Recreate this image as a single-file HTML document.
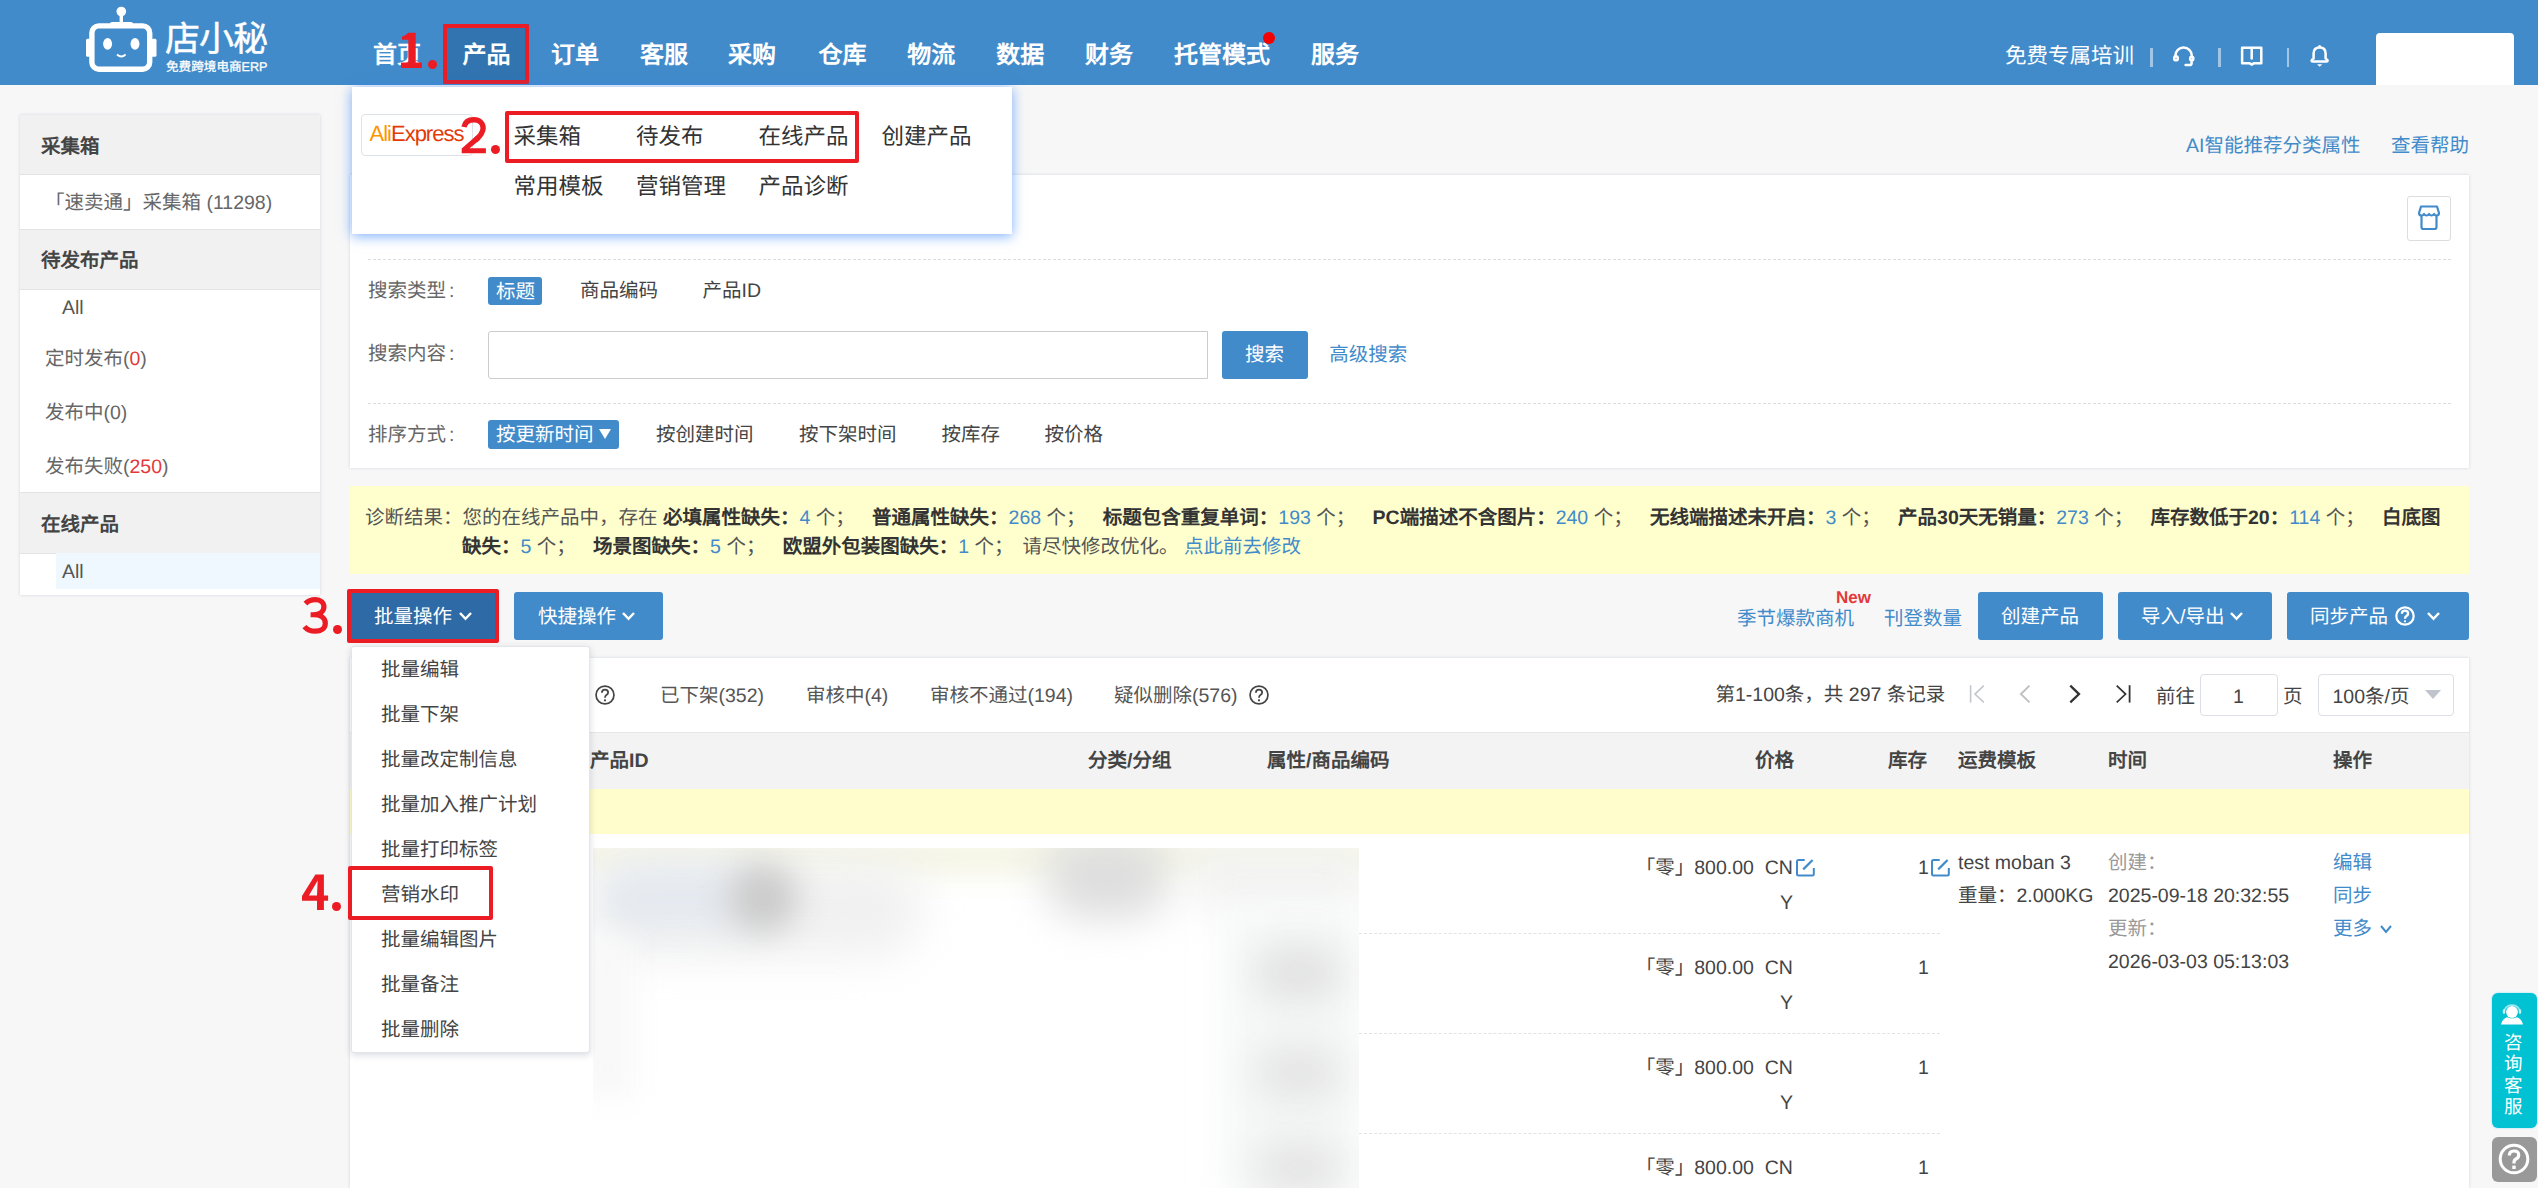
<!DOCTYPE html>
<html lang="zh-CN"><head><meta charset="utf-8"><style>
html,body{margin:0;padding:0;width:2538px;height:1188px;overflow:hidden;background:#f7f7f7;font-family:"Liberation Sans",sans-serif;text-rendering:geometricPrecision;}
.t{position:absolute;white-space:nowrap;}
b{font-weight:bold}
</style></head><body>
<div style="position:absolute;left:0px;top:0px;width:2538px;height:85px;background:#428bca"></div>
<svg style="position:absolute;left:80px;top:0px" width="90" height="80" viewBox="80 0 90 80">
<circle cx="121.3" cy="11.5" r="4.8" fill="#fff"/>
<rect x="119.6" y="13" width="3.4" height="10" fill="#fff"/>
<rect x="91.9" y="25.9" width="57.8" height="43.3" rx="7" ry="7" fill="none" stroke="#fff" stroke-width="5.4"/>
<rect x="110" y="22" width="23" height="4" rx="2" fill="#fff"/>
<rect x="86" y="38.8" width="5" height="18" rx="1.5" fill="#fff"/>
<rect x="151.5" y="38.8" width="5" height="18" rx="1.5" fill="#fff"/>
<ellipse cx="107.6" cy="43.8" rx="4.5" ry="5.9" fill="#fff"/>
<ellipse cx="135" cy="43.8" rx="4.5" ry="5.9" fill="#fff"/>
<path d="M117 54.5 Q121.3 58.5 125.6 54.5" stroke="#fff" stroke-width="1.8" fill="none"/>
</svg>
<div class="t" style="left:165px;top:19.5px;font-size:35px;line-height:40px;color:#fff;font-weight:normal;letter-spacing:-1px;-webkit-text-stroke:0.5px #fff;">店小秘</div>
<div class="t" style="left:166px;top:59.0px;font-size:12.6px;line-height:16px;color:#fff;font-weight:normal;-webkit-text-stroke:0.3px #fff;">免费跨境电商ERP</div>
<div style="position:absolute;left:443px;top:24px;width:86px;height:60px;background:#3174b0"></div>
<div class="t" style="left:373px;top:41.0px;font-size:24px;line-height:30px;color:#fff;font-weight:bold;">首页</div>
<div class="t" style="left:462.5px;top:41.0px;font-size:24px;line-height:30px;color:#fff;font-weight:bold;">产品</div>
<div class="t" style="left:551px;top:41.0px;font-size:24px;line-height:30px;color:#fff;font-weight:bold;">订单</div>
<div class="t" style="left:640px;top:41.0px;font-size:24px;line-height:30px;color:#fff;font-weight:bold;">客服</div>
<div class="t" style="left:728px;top:41.0px;font-size:24px;line-height:30px;color:#fff;font-weight:bold;">采购</div>
<div class="t" style="left:818.6px;top:41.0px;font-size:24px;line-height:30px;color:#fff;font-weight:bold;">仓库</div>
<div class="t" style="left:907.2px;top:41.0px;font-size:24px;line-height:30px;color:#fff;font-weight:bold;">物流</div>
<div class="t" style="left:996.3px;top:41.0px;font-size:24px;line-height:30px;color:#fff;font-weight:bold;">数据</div>
<div class="t" style="left:1085px;top:41.0px;font-size:24px;line-height:30px;color:#fff;font-weight:bold;">财务</div>
<div class="t" style="left:1174px;top:41.0px;font-size:24px;line-height:30px;color:#fff;font-weight:bold;">托管模式</div>
<div class="t" style="left:1311px;top:41.0px;font-size:24px;line-height:30px;color:#fff;font-weight:bold;">服务</div>
<div style="position:absolute;left:1263px;top:32px;width:12px;height:12px;border-radius:50%;background:#f40000"></div>
<div style="position:absolute;left:443px;top:24px;width:86px;height:60px;box-sizing:border-box;border:4px solid #ec1c24;border-radius:2px"></div>
<svg style="position:absolute;left:395px;top:28px" width="35" height="45" viewBox="395 28 35 45">
<path d="M408.3 32.8 H415.7 V62.6 H421.9 V68 H401 V62.6 H408.3 V39.8 H402 V36.8 Q405.5 35.8 408.3 32.8 Z" fill="#ec1c24"/>
</svg>
<div style="position:absolute;left:428.3px;top:59.6px;width:9px;height:9px;border-radius:50%;background:#ec1c24"></div>
<div class="t" style="left:2005px;top:41.4px;font-size:21.5px;line-height:30px;color:#fff;font-weight:normal;">免费专属培训</div>
<div style="position:absolute;left:2150.3px;top:48px;width:2.399999999999636px;height:19px;background:rgba(255,255,255,0.5)"></div>
<div style="position:absolute;left:2218.4px;top:48px;width:2.399999999999636px;height:19px;background:rgba(255,255,255,0.5)"></div>
<div style="position:absolute;left:2286.5px;top:48px;width:2.399999999999636px;height:19px;background:rgba(255,255,255,0.5)"></div>
<svg style="position:absolute;left:2160px;top:38px" width="180" height="36" viewBox="2160 38 180 36">
<g stroke="#fff" fill="none" stroke-width="2.5" stroke-linejoin="round" stroke-linecap="round">
<path d="M2175.45 56.2 V55.6 A8.15 8.15 0 0 1 2191.75 55.6 V56.2"/>
<rect x="2174.3" y="56.6" width="3.4" height="3.7" rx="1"/>
<rect x="2190.2" y="56.9" width="3.1" height="3.4" rx="1"/>
<path d="M2191.6 61.5 V63 Q2191.6 65.1 2189.5 65.1 H2185.6"/>
<path d="M2242.1 47.7 H2261.3 V63.2 H2254.1 L2251.7 64.6 L2249.3 63.2 H2242.1 Z"/>
<path d="M2251.7 48 V58.6"/>
<path d="M2313.6 58.6 V53.6 Q2313.6 47.6 2319.6 47.6 Q2325.6 47.6 2325.6 53.6 V58.6 Q2327.6 59.2 2327.6 60.6 Q2327.6 61.6 2326.2 61.6 H2313 Q2311.6 61.6 2311.6 60.6 Q2311.6 59.2 2313.6 58.6 Z"/>
</g>
<circle cx="2319.6" cy="46.6" r="1.5" fill="#fff"/>
<path d="M2317 64.2 H2322.3 L2319.65 66.8 Z" fill="#fff"/>
</svg>
<div style="position:absolute;left:2376px;top:33px;width:138px;height:52px;background:#fff;border-radius:4px 4px 0 0"></div>
<div style="position:absolute;left:20px;top:115px;width:300px;height:480px;background:#fff;box-shadow:0 0 3px rgba(30,40,90,0.16)"></div>
<div style="position:absolute;left:20px;top:115px;width:300px;height:59px;background:#f1f1f1;border-bottom:1px solid #e3e3e3"></div>
<div class="t" style="left:41px;top:132.0px;font-size:19.5px;line-height:30px;color:#444;font-weight:bold;">采集箱</div>
<div class="t" style="left:45px;top:188.0px;font-size:19.5px;line-height:30px;color:#666;font-weight:normal;">「速卖通」采集箱 (11298)</div>
<div style="position:absolute;left:20px;top:229px;width:300px;height:59px;background:#f1f1f1;border-top:1px solid #e3e3e3;border-bottom:1px solid #e3e3e3"></div>
<div class="t" style="left:41px;top:246.0px;font-size:19.5px;line-height:30px;color:#444;font-weight:bold;">待发布产品</div>
<div class="t" style="left:62px;top:293.0px;font-size:19.5px;line-height:30px;color:#555;font-weight:normal;">All</div>
<div class="t" style="left:45px;top:344.0px;font-size:19.5px;line-height:30px;color:#666;font-weight:normal;">定时发布(<span style="color:#e4393c">0</span>)</div>
<div class="t" style="left:45px;top:398.0px;font-size:19.5px;line-height:30px;color:#666;font-weight:normal;">发布中(0)</div>
<div class="t" style="left:45px;top:452.0px;font-size:19.5px;line-height:30px;color:#666;font-weight:normal;">发布失败(<span style="color:#e4393c">250</span>)</div>
<div style="position:absolute;left:20px;top:492px;width:300px;height:60px;background:#f1f1f1;border-top:1px solid #e3e3e3;border-bottom:1px solid #e3e3e3"></div>
<div class="t" style="left:41px;top:510.0px;font-size:19.5px;line-height:30px;color:#444;font-weight:bold;">在线产品</div>
<div style="position:absolute;left:56px;top:553px;width:264px;height:36px;background:#eff8fe"></div>
<div class="t" style="left:62px;top:557.0px;font-size:19.5px;line-height:30px;color:#555;font-weight:normal;">All</div>
<div class="t" style="left:2186px;top:131.0px;font-size:19.5px;line-height:30px;color:#428bca;font-weight:normal;">AI智能推荐分类属性</div>
<div class="t" style="left:2391px;top:131.0px;font-size:19.5px;line-height:30px;color:#428bca;font-weight:normal;">查看帮助</div>
<div style="position:absolute;left:350px;top:175px;width:2119px;height:293px;background:#fff;box-shadow:0 0 3px rgba(30,40,90,0.16)"></div>
<div style="position:absolute;left:2407px;top:196px;width:44px;height:45px;box-sizing:border-box;border:1px solid #ddd;border-radius:3px;background:#fff"></div>
<svg style="position:absolute;left:2415px;top:204px" width="28" height="28" viewBox="0 0 28 28">
<path d="M6 2.5 H22 L24 9 Q24 11.5 21.5 11.5 Q19.5 11.5 19 10 Q18.2 11.5 16.5 11.5 Q14.8 11.5 14 10 Q13.2 11.5 11.5 11.5 Q9.8 11.5 9 10 Q8.5 11.5 6.5 11.5 Q4 11.5 4 9 Z" stroke="#428bca" stroke-width="2.2" fill="none" stroke-linejoin="round"/>
<path d="M6.5 11.5 V23 Q6.5 25 8.5 25 H19.5 Q21.5 25 21.5 23 V11.5" stroke="#428bca" stroke-width="2.2" fill="none"/>
</svg>
<div style="position:absolute;left:368px;top:259px;width:2083px;height:1px;border-top:1px dashed #ddd"></div>
<div style="position:absolute;left:368px;top:403px;width:2083px;height:1px;border-top:1px dashed #ddd"></div>
<div class="t" style="left:368px;top:276.0px;font-size:19.5px;line-height:30px;color:#666;font-weight:normal;">搜索类型<span style="margin-left:3px">:</span></div>
<div style="position:absolute;left:488px;top:277px;width:54px;height:28px;background:#428bca;border-radius:3px"></div>
<div class="t" style="left:496px;top:276.5px;font-size:19.5px;line-height:30px;color:#fff;font-weight:normal;">标题</div>
<div class="t" style="left:580px;top:276.0px;font-size:19.5px;line-height:30px;color:#444;font-weight:normal;">商品编码</div>
<div class="t" style="left:702.5px;top:276.0px;font-size:19.5px;line-height:30px;color:#444;font-weight:normal;">产品ID</div>
<div class="t" style="left:368px;top:339.0px;font-size:19.5px;line-height:30px;color:#666;font-weight:normal;">搜索内容<span style="margin-left:3px">:</span></div>
<div style="position:absolute;left:488px;top:331px;width:720px;height:48px;box-sizing:border-box;border:1px solid #ccc;border-radius:3px 0 0 3px;background:#fff"></div>
<div style="position:absolute;left:1222px;top:331px;width:86px;height:48px;background:#428bca;border-radius:3px"></div>
<div class="t" style="left:1245px;top:340.0px;font-size:19.5px;line-height:30px;color:#fff;font-weight:normal;">搜索</div>
<div class="t" style="left:1329.3px;top:339.5px;font-size:19.5px;line-height:30px;color:#428bca;font-weight:normal;">高级搜索</div>
<div class="t" style="left:368px;top:420.0px;font-size:19.5px;line-height:30px;color:#666;font-weight:normal;">排序方式<span style="margin-left:3px">:</span></div>
<div style="position:absolute;left:488px;top:420px;width:131px;height:29px;background:#428bca;border-radius:3px"></div>
<div class="t" style="left:496px;top:420.0px;font-size:19.5px;line-height:30px;color:#fff;font-weight:normal;">按更新时间</div>
<div style="position:absolute;left:599px;top:429px;width:0;height:0;border-left:6px solid transparent;border-right:6px solid transparent;border-top:10px solid #fff"></div>
<div class="t" style="left:656px;top:419.5px;font-size:19.5px;line-height:30px;color:#444;font-weight:normal;">按创建时间</div>
<div class="t" style="left:799px;top:419.5px;font-size:19.5px;line-height:30px;color:#444;font-weight:normal;">按下架时间</div>
<div class="t" style="left:941.5px;top:419.5px;font-size:19.5px;line-height:30px;color:#444;font-weight:normal;">按库存</div>
<div class="t" style="left:1044.5px;top:419.5px;font-size:19.5px;line-height:30px;color:#444;font-weight:normal;">按价格</div>
<div style="position:absolute;left:350px;top:486px;width:2119px;height:88px;background:#ffffcd"></div>
<div class="t" style="left:365px;top:503.0px;font-size:19.5px;line-height:30px;color:#555;font-weight:normal;">诊断结果：您的在线产品中，存在 <b style="color:#333">必填属性缺失：</b><span style="color:#428bca">4</span> 个；<span style="display:inline-block;width:17.3px"></span><b style="color:#333">普通属性缺失：</b><span style="color:#428bca">268</span> 个；<span style="display:inline-block;width:17.3px"></span><b style="color:#333">标题包含重复单词：</b><span style="color:#428bca">193</span> 个；<span style="display:inline-block;width:17.3px"></span><b style="color:#333">PC端描述不含图片：</b><span style="color:#428bca">240</span> 个；<span style="display:inline-block;width:17.3px"></span><b style="color:#333">无线端描述未开启：</b><span style="color:#428bca">3</span> 个；<span style="display:inline-block;width:17.3px"></span><b style="color:#333">产品30天无销量：</b><span style="color:#428bca">273</span> 个；<span style="display:inline-block;width:17.3px"></span><b style="color:#333">库存数低于20：</b><span style="color:#428bca">114</span> 个；<span style="display:inline-block;width:17.3px"></span><b style="color:#333">白底图</b></div>
<div class="t" style="left:462px;top:532.0px;font-size:19.5px;line-height:30px;color:#555;font-weight:normal;"><b style="color:#333">缺失：</b><span style="color:#428bca">5</span> 个；<span style="display:inline-block;width:17.3px"></span><b style="color:#333">场景图缺失：</b><span style="color:#428bca">5</span> 个；<span style="display:inline-block;width:17.3px"></span><b style="color:#333">欧盟外包装图缺失：</b><span style="color:#428bca">1</span> 个；<span style="display:inline-block;width:9px"></span>请尽快修改优化。 <span style="color:#428bca">点此前去修改</span></div>
<div style="position:absolute;left:351px;top:593px;width:144px;height:46px;background:#2e6aa6"></div>
<div class="t" style="left:374px;top:602.0px;font-size:19.5px;line-height:30px;color:#fff;font-weight:normal;">批量操作</div>
<div style="position:absolute;left:514px;top:592px;width:149px;height:48px;background:#428bca;border-radius:3px"></div>
<div class="t" style="left:538px;top:602.0px;font-size:19.5px;line-height:30px;color:#fff;font-weight:normal;">快捷操作</div>
<div style="position:absolute;left:347px;top:589px;width:152px;height:54px;box-sizing:border-box;border:4px solid #ec1c24;border-radius:2px"></div>
<svg style="position:absolute;left:295px;top:590px" width="40" height="50" viewBox="295 590 40 50">
<path d="M305.4 603.6 C307.9 601 311.4 599.7 315.5 599.7 C320.7 599.7 323.9 602.6 323.9 606.8 C323.9 611.8 319.6 614.75 313.4 614.75 H310.6 M313.4 614.75 C321.2 614.75 325.3 618.3 325.3 623.2 C325.3 628.5 321 631.2 315.4 631.2 C310.4 631.2 306.7 629.3 304.4 626.6" stroke="#ec1c24" stroke-width="5.2" fill="none"/>
</svg>
<div style="position:absolute;left:333.2px;top:625px;width:8.8px;height:8.8px;border-radius:50%;background:#ec1c24"></div>
<svg style="position:absolute;left:457.5px;top:611px" width="15" height="9.8" viewBox="-2 -2 15 9.8"><path d="M0 0 L5.5 5.8 L11 0" stroke="#fff" stroke-width="2.5" fill="none"/></svg>
<svg style="position:absolute;left:620.5px;top:611px" width="15" height="9.8" viewBox="-2 -2 15 9.8"><path d="M0 0 L5.5 5.8 L11 0" stroke="#fff" stroke-width="2.5" fill="none"/></svg>
<div class="t" style="left:1737px;top:603.5px;font-size:19.5px;line-height:30px;color:#428bca;font-weight:normal;">季节爆款商机</div>
<div class="t" style="left:1836px;top:588.0px;font-size:17px;line-height:20px;color:#e4393c;font-weight:bold;">New</div>
<div class="t" style="left:1884px;top:603.5px;font-size:19.5px;line-height:30px;color:#428bca;font-weight:normal;">刊登数量</div>
<div style="position:absolute;left:1978px;top:592px;width:125px;height:48px;background:#428bca;border-radius:3px"></div>
<div class="t" style="left:2001px;top:602.0px;font-size:19.5px;line-height:30px;color:#fff;font-weight:normal;">创建产品</div>
<div style="position:absolute;left:2118px;top:592px;width:154px;height:48px;background:#428bca;border-radius:3px"></div>
<div class="t" style="left:2141px;top:602.0px;font-size:19.5px;line-height:30px;color:#fff;font-weight:normal;">导入/导出</div>
<svg style="position:absolute;left:2229px;top:611px" width="15" height="9.8" viewBox="-2 -2 15 9.8"><path d="M0 0 L5.5 5.8 L11 0" stroke="#fff" stroke-width="2.5" fill="none"/></svg>
<div style="position:absolute;left:2287px;top:592px;width:182px;height:48px;background:#428bca;border-radius:3px"></div>
<div class="t" style="left:2310px;top:602.0px;font-size:19.5px;line-height:30px;color:#fff;font-weight:normal;">同步产品</div>
<svg style="position:absolute;left:2395px;top:606px" width="20" height="20" viewBox="0 0 20 20">
<circle cx="10" cy="10" r="8.700000000000001" stroke="#fff" stroke-width="2.2" fill="none"/>
<path d="M6.9 7.7 Q6.9 4.7 10 4.7 Q13.1 4.7 13.1 7.4 Q13.1 9 11.4 10 Q10 10.9 10 12.7" stroke="#fff" stroke-width="2.3000000000000003" fill="none"/>
<circle cx="10" cy="15.3" r="1.15" fill="#fff"/></svg>
<svg style="position:absolute;left:2426px;top:611px" width="15" height="9.8" viewBox="-2 -2 15 9.8"><path d="M0 0 L5.5 5.8 L11 0" stroke="#fff" stroke-width="2.5" fill="none"/></svg>
<div style="position:absolute;left:350px;top:658px;width:2119px;height:530px;background:#fff;box-shadow:0 0 3px rgba(30,40,90,0.16)"></div>
<svg style="position:absolute;left:595px;top:685px" width="20" height="20" viewBox="0 0 20 20">
<circle cx="10" cy="10" r="8.950000000000001" stroke="#444" stroke-width="1.7" fill="none"/>
<path d="M6.9 7.7 Q6.9 4.7 10 4.7 Q13.1 4.7 13.1 7.4 Q13.1 9 11.4 10 Q10 10.9 10 12.7" stroke="#444" stroke-width="1.8" fill="none"/>
<circle cx="10" cy="15.3" r="1.15" fill="#444"/></svg>
<div class="t" style="left:660px;top:681.0px;font-size:19.5px;line-height:30px;color:#555;font-weight:normal;">已下架(352)</div>
<div class="t" style="left:806px;top:681.0px;font-size:19.5px;line-height:30px;color:#555;font-weight:normal;">审核中(4)</div>
<div class="t" style="left:930px;top:681.0px;font-size:19.5px;line-height:30px;color:#555;font-weight:normal;">审核不通过(194)</div>
<div class="t" style="left:1114px;top:681.0px;font-size:19.5px;line-height:30px;color:#555;font-weight:normal;">疑似删除(576)</div>
<svg style="position:absolute;left:1248.5px;top:685px" width="20" height="20" viewBox="0 0 20 20">
<circle cx="10" cy="10" r="8.950000000000001" stroke="#444" stroke-width="1.7" fill="none"/>
<path d="M6.9 7.7 Q6.9 4.7 10 4.7 Q13.1 4.7 13.1 7.4 Q13.1 9 11.4 10 Q10 10.9 10 12.7" stroke="#444" stroke-width="1.8" fill="none"/>
<circle cx="10" cy="15.3" r="1.15" fill="#444"/></svg>
<div class="t" style="left:1715.5px;top:679.5px;font-size:19.5px;line-height:30px;color:#444;font-weight:normal;">第1-100条，共 297 条记录</div>
<svg style="position:absolute;left:1960px;top:675px" width="180" height="40" viewBox="1960 675 180 40">
<path d="M1970.6 685.2 V702.6" stroke="#c4c6cc" stroke-width="1.6"/>
<path d="M1983.8 685.6 L1975 694.1 L1983.8 702.4" stroke="#c4c6cc" stroke-width="1.6" fill="none"/>
<path d="M2029.5 685.6 L2021 694.1 L2029.5 702.4" stroke="#c0c0c0" stroke-width="2" fill="none"/>
<path d="M2070.3 685.6 L2079 694.1 L2070.3 702.4" stroke="#333" stroke-width="2.3" fill="none"/>
<path d="M2116.7 685.6 L2125.6 694.1 L2116.7 702.4" stroke="#333" stroke-width="1.7" fill="none"/>
<path d="M2129.6 685.2 V702.6" stroke="#333" stroke-width="1.8"/>
</svg>
<div class="t" style="left:2156px;top:682.0px;font-size:19.5px;line-height:30px;color:#444;font-weight:normal;">前往</div>
<div style="position:absolute;left:2200px;top:674px;width:78px;height:42px;box-sizing:border-box;border:1px solid #dcdfe6;border-radius:4px;background:#fff"></div>
<div class="t" style="left:2233px;top:682.0px;font-size:19.5px;line-height:30px;color:#444;font-weight:normal;">1</div>
<div class="t" style="left:2283px;top:682.0px;font-size:19.5px;line-height:30px;color:#444;font-weight:normal;">页</div>
<div style="position:absolute;left:2318px;top:674px;width:136px;height:42px;box-sizing:border-box;border:1px solid #dcdfe6;border-radius:4px;background:#fff"></div>
<div class="t" style="left:2332.5px;top:682.0px;font-size:19.5px;line-height:30px;color:#444;font-weight:normal;">100条/页</div>
<div style="position:absolute;left:2425px;top:690px;width:0;height:0;border-left:8px solid transparent;border-right:8px solid transparent;border-top:9px solid #c0c4cc"></div>
<div style="position:absolute;left:350px;top:732px;width:2119px;height:56px;background:#f3f3f3;border-top:1px solid #e6e6e6;border-bottom:1px solid #e3e3e3"></div>
<div class="t" style="left:590px;top:746.0px;font-size:19.5px;line-height:30px;color:#444;font-weight:bold;">产品ID</div>
<div class="t" style="left:1088px;top:746.0px;font-size:19.5px;line-height:30px;color:#444;font-weight:bold;">分类/分组</div>
<div class="t" style="left:1267px;top:746.0px;font-size:19.5px;line-height:30px;color:#444;font-weight:bold;">属性/商品编码</div>
<div class="t" style="left:1755px;top:746.0px;font-size:19.5px;line-height:30px;color:#444;font-weight:bold;">价格</div>
<div class="t" style="left:1888px;top:746.0px;font-size:19.5px;line-height:30px;color:#444;font-weight:bold;">库存</div>
<div class="t" style="left:1958px;top:746.0px;font-size:19.5px;line-height:30px;color:#444;font-weight:bold;">运费模板</div>
<div class="t" style="left:2108px;top:746.0px;font-size:19.5px;line-height:30px;color:#444;font-weight:bold;">时间</div>
<div class="t" style="left:2333px;top:746.0px;font-size:19.5px;line-height:30px;color:#444;font-weight:bold;">操作</div>
<div style="position:absolute;left:350px;top:789px;width:2119px;height:45px;background:#fffdcc"></div>
<div style="position:absolute;left:593px;top:848px;width:766px;height:340px;overflow:hidden;background:#fff">
<div style="position:absolute;left:-20px;top:-10px;width:800px;height:36px;background:#f4f4e4;filter:blur(14px)"></div>
<div style="position:absolute;left:0px;top:10px;width:330px;height:100px;background:#f1f1f1;filter:blur(22px);border-radius:50px"></div>
<div style="position:absolute;left:5px;top:20px;width:160px;height:60px;background:#e4e9ef;filter:blur(18px);border-radius:30px"></div>
<div style="position:absolute;left:135px;top:15px;width:70px;height:70px;background:#cbcbcb;filter:blur(16px);border-radius:40px"></div>
<div style="position:absolute;left:-10px;top:90px;width:50px;height:160px;background:#f8f8f8;filter:blur(14px)"></div>
<div style="position:absolute;left:452px;top:-14px;width:125px;height:85px;background:#dedede;filter:blur(20px);border-radius:40px"></div>
<div style="position:absolute;left:600px;top:0px;width:170px;height:60px;background:#f2f2f2;filter:blur(20px)"></div>
<div style="position:absolute;left:630px;top:60px;width:140px;height:290px;background:#f7f8f8;filter:blur(16px)"></div>
<div style="position:absolute;left:660px;top:95px;width:90px;height:60px;background:#e3e3e3;filter:blur(18px);border-radius:40px"></div>
<div style="position:absolute;left:660px;top:195px;width:90px;height:60px;background:#e6e6e6;filter:blur(18px);border-radius:40px"></div>
<div style="position:absolute;left:660px;top:290px;width:90px;height:60px;background:#e6e6e6;filter:blur(18px);border-radius:40px"></div>
</div>
<div style="position:absolute;left:1359px;top:933px;width:581px;height:1px;border-top:1px dashed #e3e3e3"></div>
<div style="position:absolute;left:1359px;top:1033px;width:581px;height:1px;border-top:1px dashed #e3e3e3"></div>
<div style="position:absolute;left:1359px;top:1133px;width:581px;height:1px;border-top:1px dashed #e3e3e3"></div>
<div class="t" style="left:1635.7px;top:853.0px;font-size:19.5px;line-height:30px;color:#444;font-weight:normal;">「零」800.00&nbsp;&nbsp;CN</div>
<div class="t" style="left:1918px;top:852.5px;font-size:19.5px;line-height:30px;color:#444;font-weight:normal;">1</div>
<div class="t" style="left:1780px;top:888.0px;font-size:19.5px;line-height:30px;color:#444;font-weight:normal;">Y</div>
<div class="t" style="left:1635.7px;top:953.0px;font-size:19.5px;line-height:30px;color:#444;font-weight:normal;">「零」800.00&nbsp;&nbsp;CN</div>
<div class="t" style="left:1918px;top:952.5px;font-size:19.5px;line-height:30px;color:#444;font-weight:normal;">1</div>
<div class="t" style="left:1780px;top:988.0px;font-size:19.5px;line-height:30px;color:#444;font-weight:normal;">Y</div>
<div class="t" style="left:1635.7px;top:1053.0px;font-size:19.5px;line-height:30px;color:#444;font-weight:normal;">「零」800.00&nbsp;&nbsp;CN</div>
<div class="t" style="left:1918px;top:1052.5px;font-size:19.5px;line-height:30px;color:#444;font-weight:normal;">1</div>
<div class="t" style="left:1780px;top:1088.0px;font-size:19.5px;line-height:30px;color:#444;font-weight:normal;">Y</div>
<div class="t" style="left:1635.7px;top:1153.0px;font-size:19.5px;line-height:30px;color:#444;font-weight:normal;">「零」800.00&nbsp;&nbsp;CN</div>
<div class="t" style="left:1918px;top:1152.5px;font-size:19.5px;line-height:30px;color:#444;font-weight:normal;">1</div>
<svg style="position:absolute;left:1793.8px;top:856.6px" width="24" height="24" viewBox="-2 -2 24 24">
<path d="M8.7 1 H2.5 Q1 1 1 2.5 V15.1 Q1 16.6 2.5 16.6 H16.3 Q17.8 16.6 17.8 15.1 V8.9" stroke="#428bca" stroke-width="2" fill="none"/>
<path d="M7.2 10.4 L16.6 1" stroke="#428bca" stroke-width="2.2"/></svg>
<svg style="position:absolute;left:1928.9px;top:856.6px" width="24" height="24" viewBox="-2 -2 24 24">
<path d="M8.7 1 H2.5 Q1 1 1 2.5 V15.1 Q1 16.6 2.5 16.6 H16.3 Q17.8 16.6 17.8 15.1 V8.9" stroke="#428bca" stroke-width="2" fill="none"/>
<path d="M7.2 10.4 L16.6 1" stroke="#428bca" stroke-width="2.2"/></svg>
<div class="t" style="left:1958px;top:848.0px;font-size:19.5px;line-height:30px;color:#444;font-weight:normal;">test moban 3</div>
<div class="t" style="left:1958px;top:881.0px;font-size:19.5px;line-height:30px;color:#444;font-weight:normal;">重量：2.000KG</div>
<div class="t" style="left:2108px;top:848.0px;font-size:19.5px;line-height:30px;color:#999;font-weight:normal;">创建：</div>
<div class="t" style="left:2108px;top:881.0px;font-size:19.5px;line-height:30px;color:#444;font-weight:normal;">2025-09-18 20:32:55</div>
<div class="t" style="left:2108px;top:914.0px;font-size:19.5px;line-height:30px;color:#999;font-weight:normal;">更新：</div>
<div class="t" style="left:2108px;top:947.0px;font-size:19.5px;line-height:30px;color:#444;font-weight:normal;">2026-03-03 05:13:03</div>
<div class="t" style="left:2333px;top:848.0px;font-size:19.5px;line-height:30px;color:#428bca;font-weight:normal;">编辑</div>
<div class="t" style="left:2333px;top:881.0px;font-size:19.5px;line-height:30px;color:#428bca;font-weight:normal;">同步</div>
<div class="t" style="left:2333px;top:914.0px;font-size:19.5px;line-height:30px;color:#428bca;font-weight:normal;">更多</div>
<svg style="position:absolute;left:2379px;top:924px" width="14" height="10" viewBox="-2 -2 14 10"><path d="M0 0 L5.0 6 L10 0" stroke="#428bca" stroke-width="2" fill="none"/></svg>
<div style="position:absolute;left:350.5px;top:646px;width:239.0px;height:406.5px;background:#fff;border:1px solid #e3e5ea;border-radius:3px;box-sizing:border-box;box-shadow:0 2px 7px rgba(40,50,90,0.18)"></div>
<div class="t" style="left:381px;top:654.5px;font-size:19.5px;line-height:30px;color:#444;font-weight:normal;">批量编辑</div>
<div class="t" style="left:381px;top:699.5px;font-size:19.5px;line-height:30px;color:#444;font-weight:normal;">批量下架</div>
<div class="t" style="left:381px;top:744.5px;font-size:19.5px;line-height:30px;color:#444;font-weight:normal;">批量改定制信息</div>
<div class="t" style="left:381px;top:789.5px;font-size:19.5px;line-height:30px;color:#444;font-weight:normal;">批量加入推广计划</div>
<div class="t" style="left:381px;top:834.5px;font-size:19.5px;line-height:30px;color:#444;font-weight:normal;">批量打印标签</div>
<div class="t" style="left:381px;top:879.5px;font-size:19.5px;line-height:30px;color:#444;font-weight:normal;">营销水印</div>
<div class="t" style="left:381px;top:924.5px;font-size:19.5px;line-height:30px;color:#444;font-weight:normal;">批量编辑图片</div>
<div class="t" style="left:381px;top:969.5px;font-size:19.5px;line-height:30px;color:#444;font-weight:normal;">批量备注</div>
<div class="t" style="left:381px;top:1014.5px;font-size:19.5px;line-height:30px;color:#444;font-weight:normal;">批量删除</div>
<div style="position:absolute;left:348px;top:866px;width:145px;height:54px;box-sizing:border-box;border:4px solid #ec1c24;border-radius:2px"></div>
<svg style="position:absolute;left:295px;top:870px" width="40" height="45" viewBox="295 870 40 45">
<path fill-rule="evenodd" d="M315.4 874.6 H323.9 V895.4 H328.1 V900.8 H323.9 V910 H317 V900.8 H302 V895.9 Z M317.7 880.6 L308.9 895.4 H317 Z" fill="#ec1c24"/>
</svg>
<div style="position:absolute;left:332.3px;top:901.9px;width:8.8px;height:8.8px;border-radius:50%;background:#ec1c24"></div>
<div style="position:absolute;left:352px;top:87px;width:660px;height:147px;background:#fff;box-shadow:0 2px 12px rgba(40,125,250,0.62)"></div>
<div style="position:absolute;left:361px;top:114px;width:112px;height:42px;box-sizing:border-box;border:1px solid #dde2e8;border-radius:4px"></div>
<div class="t" style="left:369.5px;top:121.5px;font-size:22px;line-height:24px;color:#444;font-weight:normal;letter-spacing:-1px"><span style="color:#ff9500">Ali</span><span style="color:#e43a06">Express</span></div>
<div style="position:absolute;left:505px;top:111px;width:354px;height:52px;box-sizing:border-box;border:4px solid #ec1c24;border-radius:2px"></div>
<svg style="position:absolute;left:455px;top:110px" width="35" height="50" viewBox="455 110 35 50">
<path d="M464 127 C465 122 469 119.7 473.9 119.7 C479.6 119.7 483.1 123.4 483.1 128.2 C483.1 132.3 481 135.2 475.8 140" stroke="#ec1c24" stroke-width="5.4" fill="none"/>
<path d="M480.3 139.4 L469.6 148.2 H485.9 V153.2 H461.7 V148.4 L476.5 135.6 Z" fill="#ec1c24"/>
</svg>
<div style="position:absolute;left:491.3px;top:145px;width:9px;height:9px;border-radius:50%;background:#ec1c24"></div>
<div class="t" style="left:513.5px;top:121.5px;font-size:22.5px;line-height:30px;color:#333;font-weight:normal;">采集箱</div>
<div class="t" style="left:636px;top:121.5px;font-size:22.5px;line-height:30px;color:#333;font-weight:normal;">待发布</div>
<div class="t" style="left:758.5px;top:121.5px;font-size:22.5px;line-height:30px;color:#333;font-weight:normal;">在线产品</div>
<div class="t" style="left:881.5px;top:121.5px;font-size:22.5px;line-height:30px;color:#333;font-weight:normal;">创建产品</div>
<div class="t" style="left:513.5px;top:172.0px;font-size:22.5px;line-height:30px;color:#333;font-weight:normal;">常用模板</div>
<div class="t" style="left:636px;top:172.0px;font-size:22.5px;line-height:30px;color:#333;font-weight:normal;">营销管理</div>
<div class="t" style="left:758.5px;top:172.0px;font-size:22.5px;line-height:30px;color:#333;font-weight:normal;">产品诊断</div>
<div style="position:absolute;left:2492px;top:993px;width:45px;height:135px;background:#00c2d2;border-radius:6px;box-shadow:0 0 2px #7fd8ff"></div>
<svg style="position:absolute;left:2492px;top:993px" width="45" height="40" viewBox="2492 993 45 40">
<circle cx="2512" cy="1012" r="5.9" fill="#fff"/>
<path d="M2504.3 1010.5 A8.2 8.2 0 0 1 2519.7 1010.5" stroke="rgba(255,255,255,0.6)" stroke-width="1.6" fill="none"/>
<ellipse cx="2504" cy="1011.5" rx="1.3" ry="2.6" fill="rgba(255,255,255,0.75)"/>
<ellipse cx="2520" cy="1011.5" rx="1.3" ry="2.6" fill="rgba(255,255,255,0.75)"/>
<path d="M2501 1024.6 Q2502.5 1018.5 2507 1017.3 Q2512 1019.6 2517 1017.3 Q2521.5 1018.5 2523 1024.6 Z" fill="#fff"/>
</svg>
<div class="t" style="left:2504px;top:1032.0px;font-size:18.5px;line-height:22px;color:#fff;font-weight:normal;">咨</div>
<div class="t" style="left:2504px;top:1053.3px;font-size:18.5px;line-height:22px;color:#fff;font-weight:normal;">询</div>
<div class="t" style="left:2504px;top:1074.6px;font-size:18.5px;line-height:22px;color:#fff;font-weight:normal;">客</div>
<div class="t" style="left:2504px;top:1095.9px;font-size:18.5px;line-height:22px;color:#fff;font-weight:normal;">服</div>
<div style="position:absolute;left:2492px;top:1137px;width:45px;height:45px;background:#999;border-radius:6px"></div>
<svg style="position:absolute;left:2498px;top:1143px" width="32" height="32" viewBox="0 0 32 32">
<circle cx="16" cy="16" r="13.8" stroke="#fff" stroke-width="3" fill="none"/>
<path d="M11.3 12.6 Q11.3 8 16 8 Q20.7 8 20.7 12 Q20.7 14.6 18 16 Q16 17 16 19.5 V20.5" stroke="#fff" stroke-width="3.2" fill="none"/>
<rect x="14.3" y="22.6" width="3.4" height="3.4" fill="#fff"/>
</svg>
</body></html>
